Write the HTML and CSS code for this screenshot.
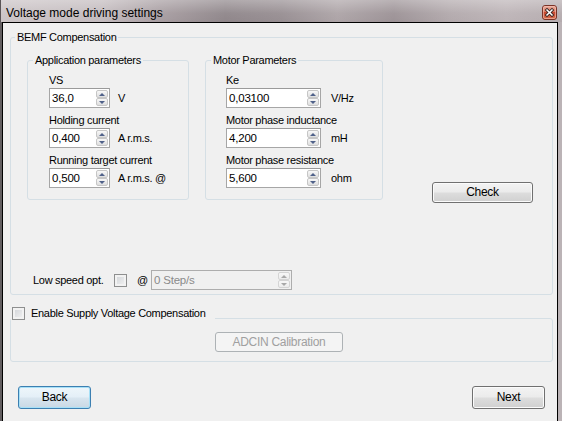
FILE: index.html
```html
<!DOCTYPE html>
<html>
<head>
<meta charset="utf-8">
<link rel="stylesheet" href="styles.css">
</head>
<body>
<div class="window">
  <div class="titlebar">
    <span class="title">Voltage mode driving settings</span>
    <span class="close">
      <svg width="15" height="15" viewBox="0 0 15 15">
        <defs>
          <linearGradient id="cg" x1="0" y1="0" x2="0" y2="1">
            <stop offset="0" stop-color="#eeb1a2"/>
            <stop offset="0.45" stop-color="#dc7a62"/>
            <stop offset="0.5" stop-color="#c8472f"/>
            <stop offset="1" stop-color="#d9704f"/>
          </linearGradient>
        </defs>
        <rect x="0.5" y="0.5" width="14" height="14" rx="2.5" fill="url(#cg)" stroke="#7a3327"/>
        <rect x="1.5" y="1.5" width="12" height="12" rx="1.5" fill="none" stroke="#f3c3b6" stroke-opacity="0.6"/>
        <path d="M5 5 L10 10 M10 5 L5 10" stroke="#3b2724" stroke-width="3.2" stroke-linecap="square"/>
        <path d="M5 5 L10 10 M10 5 L5 10" stroke="#ffffff" stroke-width="1.5" stroke-linecap="square"/>
      </svg>
    </span>
  </div>
  <div class="frame-body">
    <div class="client">
      <fieldset class="group bemf">
        <legend>BEMF Compensation</legend>
        <div class="params-row">
          <fieldset class="group sub app">
            <legend>Application parameters</legend>
            <div class="fields">
              <div class="field">
                <div class="lbl">VS</div>
                <div class="inrow">
                  <div class="spin w-app"><span class="val">36,0</span><span class="arrows"><span class="up"></span><span class="dn"></span></span></div>
                  <span class="unit">V</span>
                </div>
              </div>
              <div class="field">
                <div class="lbl">Holding current</div>
                <div class="inrow">
                  <div class="spin w-app"><span class="val">0,400</span><span class="arrows"><span class="up"></span><span class="dn"></span></span></div>
                  <span class="unit">A r.m.s.</span>
                </div>
              </div>
              <div class="field">
                <div class="lbl">Running target current</div>
                <div class="inrow">
                  <div class="spin w-app"><span class="val">0,500</span><span class="arrows"><span class="up"></span><span class="dn"></span></span></div>
                  <span class="unit">A r.m.s. @</span>
                </div>
              </div>
            </div>
          </fieldset>
          <fieldset class="group sub motor">
            <legend>Motor Parameters</legend>
            <div class="fields">
              <div class="field">
                <div class="lbl">Ke</div>
                <div class="inrow">
                  <div class="spin w-motor"><span class="val">0,03100</span><span class="arrows"><span class="up"></span><span class="dn"></span></span></div>
                  <span class="unit">V/Hz</span>
                </div>
              </div>
              <div class="field">
                <div class="lbl">Motor phase inductance</div>
                <div class="inrow">
                  <div class="spin w-motor"><span class="val">4,200</span><span class="arrows"><span class="up"></span><span class="dn"></span></span></div>
                  <span class="unit">mH</span>
                </div>
              </div>
              <div class="field">
                <div class="lbl">Motor phase resistance</div>
                <div class="inrow">
                  <div class="spin w-motor"><span class="val">5,600</span><span class="arrows"><span class="up"></span><span class="dn"></span></span></div>
                  <span class="unit">ohm</span>
                </div>
              </div>
            </div>
          </fieldset>
          <div class="btn check">Check</div>
        </div>
        <div class="lowspeed">
          <span class="ls-label">Low speed opt.</span>
          <span class="cb"></span>
          <span class="at">@</span>
          <div class="spin disabled"><span class="val">0 Step/s</span><span class="arrows"><span class="up"></span><span class="dn"></span></span></div>
        </div>
      </fieldset>
      <fieldset class="group supply">
        <legend><span class="cb"></span><span class="cb-text">Enable Supply Voltage Compensation</span></legend>
        <div class="btn disabled-btn adcin">ADCIN Calibration</div>
      </fieldset>
      <div class="nav">
        <div class="btn nav-btn focused">Back</div>
        <div class="btn nav-btn">Next</div>
      </div>
    </div>
  </div>
</div>
</body>
</html>
```
FILE: styles.css
```css
* { box-sizing: border-box; }
html, body { margin: 0; padding: 0; }
body {
  width: 562px;
  height: 421px;
  overflow: hidden;
  font-family: "Liberation Sans", Arial, sans-serif;
  font-size: 11px;
  letter-spacing: -0.3px;
  color: #000;
  background: #f0f0f0;
}
.window {
  width: 562px;
  height: 421px;
  display: flex;
  flex-direction: column;
}
.titlebar {
  height: 22px;
  flex: none;
  display: flex;
  justify-content: space-between;
  align-items: flex-start;
  padding: 0 5px 0 5px;
  border-left: 1px solid #5a5557;
  background:
    linear-gradient(rgba(255,255,255,0.30), rgba(255,255,255,0.05) 60%, rgba(255,255,255,0)),
    linear-gradient(to right, #cbc4c6 0%, #c3bbbe 18%, #a89ea2 28%, #8f868a 40%, #978e92 50%, #ada4a7 60%, #9c9296 70%, #b2a9ac 80%, #bdb4b7 90%, #b5acaf 100%);
}
.title {
  font-size: 12px;
  line-height: 16px;
  margin-top: 5px;
  letter-spacing: 0;
  color: #000;
}
.close {
  width: 15px;
  height: 15px;
  margin-top: 5px;
  display: block;
}
.close svg { display: block; }
.frame-body {
  flex: 1;
  display: flex;
  border-left: 2px solid #625e60;
  padding-right: 4px;
  background: #bbb3b6;
}
.client {
  flex: 1;
  border: 1px solid #000;
  border-bottom: none;
  background: #f0f0f0;
  display: flex;
  flex-direction: column;
  align-items: flex-start;
}
.group {
  min-width: 0;
  border: 1px solid #d5dfe5;
  border-radius: 3px;
}
.group > legend {
  padding: 0 2px;
  line-height: 13px;
  height: 13px;
}
fieldset.bemf {
  margin: 8px 0 0 7px;
  padding: 0 0 4px 0;
  width: 543px;
}
.bemf > legend { margin-left: 4px; }
.params-row {
  display: flex;
  align-items: flex-start;
  margin-top: 10px;
}
fieldset.sub { margin: 0 0 0 16px; padding: 0; }
.sub > legend { margin-left: 5px; }
.app { width: 162px; }
.motor { width: 178px; }
.fields { padding: 7px 0 11px 21px; }
.motor .fields { padding-left: 20px; }
.field + .field { margin-top: 6px; }
.lbl { line-height: 13px; height: 13px; white-space: nowrap; }
.inrow {
  display: flex;
  align-items: center;
  margin-top: 1px;
}
.spin {
  height: 20px;
  border: 1px solid #a6a6a6;
  border-top-color: #9a9a9a;
  background: #fff;
  display: flex;
  justify-content: space-between;
}
.w-app { width: 61px; }
.w-motor { width: 95px; }
.val {
  padding-left: 2px;
  line-height: 18px;
  font-size: 11.5px;
  letter-spacing: -0.2px;
}
.arrows {
  width: 12px;
  margin: 1px;
  display: flex;
  flex-direction: column;
}
.arrows span {
  height: 8px;
  border: 1px solid #c6c6c6;
  border-radius: 2px;
  background: linear-gradient(#f8f8f8, #dedede);
  display: flex;
  align-items: center;
  justify-content: center;
}
.up::before {
  content: "";
  border-left: 3px solid transparent;
  border-right: 3px solid transparent;
  border-bottom: 3px solid #4f6189;
}
.dn::before {
  content: "";
  border-left: 3px solid transparent;
  border-right: 3px solid transparent;
  border-top: 3px solid #4f6189;
}
.unit { margin-left: 8px; white-space: nowrap; }
.motor .unit { margin-left: 10px; }
.btn {
  border: 1px solid #707070;
  border-radius: 3px;
  background: linear-gradient(#f3f3f3 0%, #ebebeb 48%, #dddddd 52%, #d0d0d0 100%);
  box-shadow: inset 0 0 0 1px #fbfbfb;
  text-align: center;
  white-space: nowrap;
}
.check {
  margin-left: 49px;
  margin-top: 128px;
  width: 101px;
  height: 21px;
  line-height: 19px;
  font-size: 12px;
}
.lowspeed {
  display: flex;
  align-items: center;
  margin-top: 67px;
  margin-left: 22px;
  height: 20px;
}
.ls-label { width: 81px; white-space: nowrap; }
.cb {
  display: block;
  width: 13px;
  height: 13px;
  flex: none;
  border: 1px solid #8e8f8f;
  background: linear-gradient(135deg, #cfd2d6, #f4f4f4);
  box-shadow: inset 0 0 0 2px #f2f2f2;
}
.at { width: 14px; margin-left: 10px; }
.spin.disabled {
  width: 141px;
  background: #f0f0f0;
  border-color: #adadad;
  color: #8a8a8a;
}
.spin.disabled .up::before { border-bottom-color: #a8a8a8; }
.spin.disabled .dn::before { border-top-color: #a8a8a8; }
.spin.disabled .arrows span { border-color: #d4d4d4; background: linear-gradient(#f7f7f7, #ececec); }
fieldset.supply {
  margin: 12px 0 0 7px;
  padding: 0 0 9px 0;
  width: 543px;
}
.supply > legend {
  width: 204px;
  height: 23px;
  padding: 0;
  display: flex;
  align-items: flex-start;
}
.supply .cb { margin-left: 1px; }
.cb-text { margin-left: 6px; line-height: 13px; white-space: nowrap; }
.disabled-btn {
  border-color: #adb2b5;
  background: #f4f4f4;
  box-shadow: none;
  color: #a0a0a0;
}
.adcin {
  margin-left: 204px;
  margin-top: 2px;
  width: 128px;
  height: 20px;
  line-height: 18px;
  font-size: 12px;
}
.nav {
  align-self: stretch;
  display: flex;
  justify-content: space-between;
  padding: 0 12px 0 15px;
  margin-top: 24px;
}
.nav-btn {
  width: 73px;
  height: 23px;
  line-height: 21px;
  font-size: 12px;
}
.focused {
  border-color: #3c7fb1;
  box-shadow: inset 0 0 0 1px #a7e0f7;
  background: linear-gradient(#eef6fb 0%, #e4eff7 48%, #d8e5ef 52%, #c9d8e4 100%);
}
```
